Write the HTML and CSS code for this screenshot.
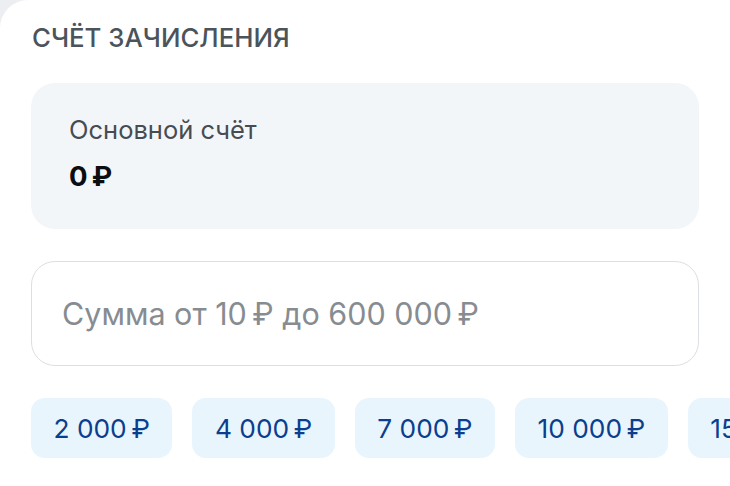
FILE: index.html
```html
<!DOCTYPE html>
<html lang="ru">
<head>
    <meta charset="UTF-8">
    <meta name="viewport" content="width=device-width, initial-scale=1.0">
    <title>Счёт зачисления</title>
    <link rel="stylesheet" href="styles.css">
</head>
<body>
    <div class="sheet">
        <h2 class="section-title">СЧЁТ ЗАЧИСЛЕНИЯ</h2>
        <div class="account-card">
            <div class="account-name">Основной счёт</div>
            <div class="account-balance">0&#8239;₽</div>
        </div>
        <div class="amount-field">
            <input type="text" class="amount-input" placeholder="Сумма от 10&#8239;₽ до 600&nbsp;000&#8239;₽">
        </div>
        <div class="chips">
            <button class="chip">2&nbsp;000&#8239;₽</button>
            <button class="chip">4&nbsp;000&#8239;₽</button>
            <button class="chip">7&nbsp;000&#8239;₽</button>
            <button class="chip">10&nbsp;000&#8239;₽</button>
            <button class="chip">15&nbsp;000&#8239;₽</button>
        </div>
    </div>
</body>
</html>
```

FILE: styles.css
```css
html, body {
    margin: 0;
    height: 100%;
    background: #eceef1;
    overflow: hidden;
}
.sheet {
    box-sizing: border-box;
    height: 100%;
    background: #fff;
    border-top-left-radius: 28px;
    padding: 22px 31px 0 31px;
    font-family: "Inter", "Noto Sans", sans-serif;
}
.section-title {
    margin: 0 0 0 1px;
    font-size: 25.8px;
    font-weight: 500;
    color: #4b535b;
    line-height: 32px;
}
.account-card {
    margin-top: 29px;
    height: 146px;
    box-sizing: border-box;
    background: #f3f6f9;
    border-radius: 24px;
    padding: 30px 38px;
}
.account-name {
    font-size: 25.5px;
    color: #474c52;
    line-height: 34px;
}
.account-balance {
    margin-top: 13px;
    font-size: 27.5px;
    font-weight: 700;
    color: #0b0d10;
    line-height: 32px;
}
.amount-field {
    margin-top: 32px;
    height: 105px;
    box-sizing: border-box;
    border: 1px solid #dcdfe3;
    border-radius: 24px;
    display: flex;
    align-items: center;
    padding: 0 30px;
}
.amount-input {
    flex: 1;
    border: none;
    outline: none;
    background: transparent;
    font-family: inherit;
    font-size: 30.5px;
    color: #1b1f24;
    padding: 0;
}
.amount-input::placeholder {
    color: #878c91;
}
.chips {
    margin-top: 32px;
    display: flex;
    gap: 20px;
    white-space: nowrap;
}
.chip {
    flex: none;
    height: 60px;
    padding: 0 22.5px;
    border: none;
    border-radius: 14px;
    background: #e9f5fd;
    color: #0b3f8e;
    font-family: inherit;
    font-size: 26.3px;
    cursor: pointer;
}
```
